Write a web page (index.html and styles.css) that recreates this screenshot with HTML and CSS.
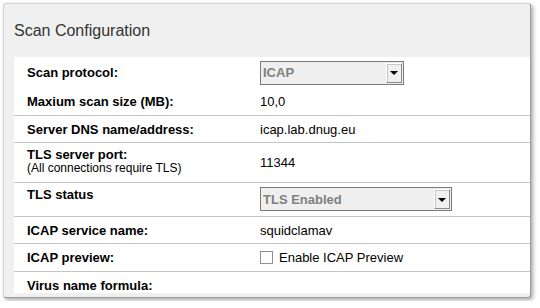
FILE: index.html
```html
<!DOCTYPE html>
<html lang="en">
<head>
    <meta charset="UTF-8">
    <title>Scan Configuration</title>
    <link rel="stylesheet" href="styles.css">
</head>
<body>

    <div class="panel">
        <h2 class="panel-title">Scan Configuration</h2>

        <div class="panel-body">
            <div class="row row-protocol">
                <div class="label">Scan protocol:</div>
                <div class="value">
                    <div class="select select-short">
                        <span class="select-text">ICAP</span>
                        <span class="select-btn"><span class="arrow"></span></span>
                    </div>
                </div>
            </div>

            <div class="row row-size">
                <div class="label">Maxium scan size (MB):</div>
                <div class="value">10,0</div>
            </div>

            <div class="row row-dns">
                <div class="label">Server DNS name/address:</div>
                <div class="value">icap.lab.dnug.eu</div>
            </div>

            <div class="row row-port">
                <div class="label label-top">
                    TLS server port:
                    <span class="sub">(All connections require TLS)</span>
                </div>
                <div class="value">11344</div>
            </div>

            <div class="row row-tls">
                <div class="label label-top">TLS status</div>
                <div class="value value-top">
                    <div class="select select-long">
                        <span class="select-text">TLS Enabled</span>
                        <span class="select-btn"><span class="arrow"></span></span>
                    </div>
                </div>
            </div>

            <div class="row row-service">
                <div class="label">ICAP service name:</div>
                <div class="value">squidclamav</div>
            </div>

            <div class="row row-preview">
                <div class="label">ICAP preview:</div>
                <div class="value">
                    <label class="check"><span class="box"></span>Enable ICAP Preview</label>
                </div>
            </div>

            <div class="row row-virus">
                <div class="label">Virus name formula:</div>
                <div class="value"></div>
            </div>
        </div>
    </div>

</body>
</html>
```

FILE: styles.css
```css
body {
    margin: 0;
    background-color: #fff;
    font-family: "Liberation Sans", Arial, Helvetica, sans-serif;
    color: #000;
}

.panel {
    margin: 3px;
    width: 528px;
    box-sizing: border-box;
    background-color: #f0f0f0;
    border: 1px solid #d4d4d4;
    border-right-color: #9a9a9a;
    border-bottom-color: #9a9a9a;
    border-radius: 3px;
    padding: 0 0 4px 10px;
    box-shadow: 2px 2px 4px rgba(0, 0, 0, 0.35);
}

.panel-title {
    margin: 0;
    padding: 17px 0 16px;
    font-size: 16px;
    font-weight: normal;
    line-height: 20px;
    color: #333;
}

.panel-body {
    background-color: #fff;
    height: 236px;
    overflow: hidden;
}

.row {
    display: grid;
    grid-template-columns: 246px 1fr;
    align-items: center;
    border-bottom: 1px solid #c4c4c4;
    font-size: 13px;
}

.label {
    padding-left: 13px;
    font-weight: bold;
}

.label-top {
    align-self: start;
    padding-top: 5px;
    line-height: 14px;
}

.label .sub {
    display: block;
    font-size: 12px;
    font-weight: normal;
    line-height: 12px;
}

.value-top {
    align-self: start;
    padding-top: 4px;
}

.row-protocol { height: 31px; border-bottom: none; }
.row-size { height: 27px; }
.row-dns { height: 26px; }
.row-port { height: 39px; }
.row-tls { height: 33px; }
.row-service { height: 26px; }
.row-preview { height: 27px; }
.row-virus { height: 27px; border-bottom: none; }

/* classic style drop down */
.select {
    display: flex;
    align-items: center;
    justify-content: space-between;
    box-sizing: border-box;
    height: 24px;
    border: 1px solid #7a7a7a;
    background-color: #efefef;
    padding: 0 1px 0 2px;
}

.select-short { width: 144px; }
.select-long { width: 192px; }

.select-text {
    font-weight: bold;
    color: #808080;
}

.select-btn {
    display: flex;
    align-items: center;
    justify-content: center;
    box-sizing: border-box;
    width: 16px;
    height: 20px;
    background-color: #f0f0f0;
    border: 1px solid #fff;
    border-right-color: #8a8a8a;
    border-bottom-color: #8a8a8a;
    box-shadow: 1px 1px 0 #c8c8c8 inset;
}

.arrow {
    width: 0;
    height: 0;
    border-left: 4px solid transparent;
    border-right: 4px solid transparent;
    border-top: 4px solid #000;
    margin-top: 1px;
}

.check {
    display: flex;
    align-items: center;
}

.check .box {
    width: 13px;
    height: 13px;
    box-sizing: border-box;
    border: 1px solid #8f8f8f;
    background-color: #fff;
    margin-right: 6px;
}
```
